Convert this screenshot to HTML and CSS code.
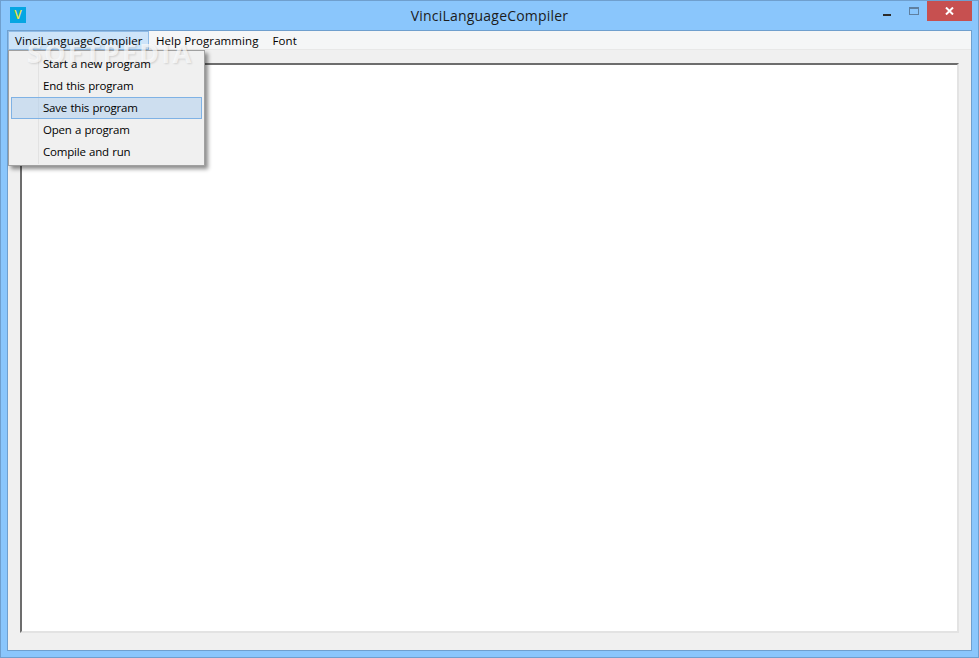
FILE: index.html
```html
<!DOCTYPE html>
<html>
<head>
<meta charset="utf-8">
<title>VinciLanguageCompiler</title>
<link rel="stylesheet" href="styles.css">
</head>
<body>
<div class="window">
  <header class="titlebar">
    <div class="app-icon">V</div>
    <div class="title">VinciLanguageCompiler</div>
    <div class="controls">
      <div class="ctl ctl-min"><svg width="8" height="2" viewBox="0 0 8 2"><rect width="8" height="2" fill="#2b2b2b"/></svg></div>
      <div class="ctl ctl-max"><svg width="10" height="8" viewBox="0 0 10 8"><rect x="0.5" y="0.5" width="9" height="7" fill="none" stroke="#5f7f9f"/><rect width="10" height="2" fill="#5f7f9f"/></svg></div>
      <div class="ctl ctl-close"><svg width="9" height="8" viewBox="0 0 9 8"><path d="M1 0.5 L8 7.5 M8 0.5 L1 7.5" stroke="#fff" stroke-width="2" fill="none"/></svg></div>
    </div>
  </header>
  <div class="client">
    <nav class="menubar">
      <div class="menu-item menu-active"><span class="label">VinciLanguageCompiler</span></div>
      <div class="menu-item"><span class="label">Help Programming</span></div>
      <div class="menu-item"><span class="label">Font</span></div>
    </nav>
    <main class="content">
      <div class="editor"></div>
    </main>
  </div>
  <div class="dropdown">
    <div class="dd-item"><span class="label">Start a new program</span></div>
    <div class="dd-item"><span class="label">End this program</span></div>
    <div class="dd-item dd-hover"><span class="label">Save this program</span></div>
    <div class="dd-item"><span class="label">Open a program</span></div>
    <div class="dd-item"><span class="label">Compile and run</span></div>
  </div>
  <div class="watermark">SOFTPEDIA</div>
</div>
</body>
</html>
```
FILE: styles.css
```css
* { box-sizing: border-box; }
html, body { margin: 0; padding: 0; }
body { width: 979px; height: 658px; overflow: hidden; font-family: "Open Sans", "Noto Sans", sans-serif; color: #000; }
.window { position: relative; width: 979px; height: 658px; background: #8ac6fc; border: 1px solid #6f9fce; display: flex; flex-direction: column; }
.titlebar { height: 29px; flex: none; display: flex; align-items: flex-start; position: relative; }
.app-icon { width: 16px; height: 16px; margin: 6px 0 0 9px; background: #05a6e2; color: #e8e43c; font-size: 12px; font-weight: 600; line-height: 16px; text-align: center; }
.title { position: absolute; left: 0; right: 0; top: 5px; text-align: center; font-size: 14px; line-height: 20px; color: #1c1c1c; letter-spacing: 0.2px; }
.controls { margin-left: auto; display: flex; margin-right: 6px; }
.ctl { display: flex; align-items: center; justify-content: center; }
.ctl-min { width: 28px; height: 20px; padding-top: 7px; }
.ctl-max { width: 26px; height: 20px; padding-bottom: 1px; }
.ctl-close { width: 45px; height: 20px; background: #c75050; }
.client { flex: 1; margin: 0 6px 6px 6px; border: 1px solid #6f9fce; background: #f0f0f0; display: flex; flex-direction: column; min-height: 0; }
.menubar { height: 19px; flex: none; background: #f5f6f7; border-bottom: 1px solid #e8e8e8; display: flex; align-items: flex-start; font-size: 11.5px; letter-spacing: 0.08px; }
.menu-item { padding: 0 7px; height: 18px; line-height: 19px; white-space: nowrap; }
.menu-active { background: #cde4f9; border: 1px solid #8fbbe6; height: 19px; line-height: 17px; width: 141px; padding: 0 6px; }
.label { position: relative; z-index: 2; }
.content { flex: 1; padding: 13px 12px 17px 12px; min-height: 0; display: flex; }
.editor { flex: 1; background: #fff; border-top: 2px solid #6d6d6d; border-left: 2px solid #6d6d6d; border-right: 2px solid #e3e3e3; border-bottom: 2px solid #e3e3e3; }
.dropdown { position: absolute; left: 7px; top: 49px; width: 197px; height: 116px; background: #f0f0f0; border: 1px solid #a0a0a0; box-shadow: 3px 3px 4px rgba(0,0,0,.45); padding: 2px; font-size: 11.5px; letter-spacing: -0.2px; word-spacing: 0.5px; background-image: linear-gradient(#e2e2e2, #e2e2e2); background-size: 1px 110px; background-position: 29px 3px; background-repeat: no-repeat; }
.dd-item { height: 22px; line-height: 20px; padding-left: 31px; border: 1px solid transparent; white-space: nowrap; }
.dd-hover { background: rgba(170, 204, 238, .5); border-color: #7fb2e5; }
.watermark { position: absolute; left: 26px; top: 37px; z-index: 1; font-size: 27px; font-weight: 700; letter-spacing: 2.2px; color: rgba(255,255,255,.7); text-shadow: 1px 1px 2px rgba(0,0,0,.13); line-height: 30px; pointer-events: none; }
```
